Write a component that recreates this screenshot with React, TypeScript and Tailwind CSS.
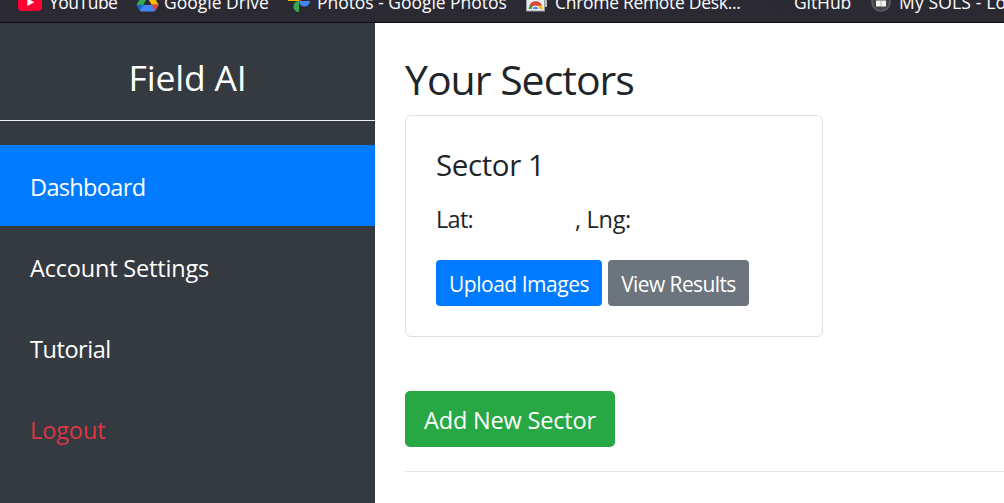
import React from "react";

function YouTubeIcon() {
  return (
    <svg width="24" height="22" viewBox="0 0 24 22" className="block">
      <rect x="0" y="4" width="24" height="17" rx="4" fill="#ff0033" />
      <path d="M9.3 8.4v7.6l7-3.8z" fill="#fff" />
    </svg>
  );
}

function DriveIcon() {
  return (
    <svg width="23" height="22" viewBox="0 0 23 22" className="block">
      <path d="M8 2h7l-3.5 5.6L4.2 20.500 0.500 14.600z" fill="#34a853" />
      <path d="M8 2h7l7.700 12.800h-7.200z" fill="#fbbc04" />
      <path d="M7.600 14.800h15.100l-3.500 5.900c-.3.500-.8.800-1.400.8H5.200c-.6 0-1.200-.3-1.400-.8z" fill="#4285f4" />
      <path d="M15.500 14.800h7.200l-3.700 6z" fill="#ea4335" />
      <path d="M0.500 14.800h7.100l-3.700 6z" fill="#1967d2" />
      <path d="M11.500 8.400l4 6.400H7.600z" fill="#2b2a33" />
    </svg>
  );
}

function PhotosIcon() {
  return (
    <svg width="22" height="24" viewBox="0 0 22 24" className="block">
      <path d="M11 1a5.500 5.500 0 0 1 0 11z" fill="#ea4335" />
      <path d="M0 12a5.500 5.500 0 0 1 11 0z" fill="#fbbc04" />
      <path d="M11 12h11a5.500 5.500 0 0 1-11 0z" fill="#4285f4" />
      <path d="M11 12v11a5.500 5.500 0 0 1 0-11z" fill="#34a853" />
    </svg>
  );
}

function RemoteDesktopIcon() {
  return (
    <svg width="22" height="24" viewBox="0 0 22 24" className="block">
      <rect x="5" y="1" width="16" height="17" fill="#b9bcbd" />
      <rect x="0.500" y="5" width="18" height="17" fill="#eceeee" stroke="#9c9f9f" />
      <path d="M2.500 20a7 7 0 0 1 14 0z" fill="#34a853" />
      <path d="M3.500 16a7 7 0 0 1 12.500 0l-3 1.500H6z" fill="#db4437" />
      <path d="M12 16.500h4a7 7 0 0 1 .5 3.500H12z" fill="#fbbc04" />
      <path d="M6 20a3.500 3.500 0 0 1 7 0z" fill="#fff" />
      <path d="M7 20a2.500 2.500 0 0 1 5 0z" fill="#4285f4" />
    </svg>
  );
}

function GitHubIcon() {
  return (
    <svg width="22" height="22" viewBox="0 0 22 22" className="block">
      <circle cx="11" cy="11" r="10" fill="#292a30" />
    </svg>
  );
}

function SolsIcon() {
  return (
    <svg width="20" height="22" viewBox="0 0 20 22" className="block">
      <circle cx="10" cy="12" r="9" fill="#444447" stroke="#5f5f62" strokeWidth="1.500" />
      <path d="M5 10.500h10v6H5z" fill="#f4f4f4" />
      <path d="M10 10.500v6" stroke="#a5a5a7" strokeWidth="0.800" />
    </svg>
  );
}

function BookmarksBar() {
  const text = "shrink-0 whitespace-nowrap pt-px text-[17.5px] leading-6";
  return (
    <header className="h-[23px] overflow-hidden border-b border-[#0c0c10] bg-[#2b2a33] text-[#fbfbfe]">
      <div className="-mt-[11px] flex h-6 items-center pl-[18px]">
        <div className="flex w-[118px] shrink-0 items-center gap-[7px]">
          <YouTubeIcon />
          <span className={`${text} tracking-[-0.5px]`}>YouTube</span>
        </div>
        <div className="flex w-[152px] shrink-0 items-center gap-[5px]">
          <DriveIcon />
          <span className={text}>Google Drive</span>
        </div>
        <div className="flex w-[238px] shrink-0 items-center gap-[7px]">
          <PhotosIcon />
          <span className={`${text} tracking-[-0.04px]`}>Photos - Google Photos</span>
        </div>
        <div className="flex w-[240px] shrink-0 items-center gap-[7px]">
          <RemoteDesktopIcon />
          <span className={`${text} tracking-[-0.3px]`}>Chrome Remote Desk...</span>
        </div>
        <div className="flex w-[105px] shrink-0 items-center gap-[6px]">
          <GitHubIcon />
          <span className={`${text} tracking-[-0.1px]`}>GitHub</span>
        </div>
        <div className="flex shrink-0 items-center gap-[8px]">
          <SolsIcon />
          <span className={`${text} tracking-[0.15px]`}>My SOLS - Lo</span>
        </div>
      </div>
    </header>
  );
}

function Sidebar() {
  const item = "flex h-[81px] items-center pl-[30px] pt-1 text-[23.5px] whitespace-nowrap";
  return (
    <aside className="w-[375px] shrink-0 bg-[#343a40] text-white">
      <div className="flex h-[98px] items-center justify-center border-b border-[#f0f1f2] pt-[10px] text-[35.5px] leading-10 tracking-[-0.2px]">
        Field AI
      </div>
      <nav className="mt-6">
        <a className={`${item} bg-[#007bff] tracking-[-0.65px]`}>Dashboard</a>
        <a className={`${item} tracking-[-0.18px]`}>Account Settings</a>
        <a className={`${item} tracking-[-0.45px]`}>Tutorial</a>
        <a className={`${item} tracking-[-0.1px] text-[#dc3545]`}>Logout</a>
      </nav>
    </aside>
  );
}

function SectorCard() {
  return (
    <section className="mt-[2px] h-[222px] w-[418px] rounded-[6px] border border-[#dfdfdf] px-[30px] pt-[29px]">
      <h2 className="text-[29.5px] leading-10 tracking-[-0.4px]">Sector 1</h2>
      <p className="mt-4 flex text-[23.5px] leading-9">
        <span className="w-[139px] tracking-[-0.7px]">Lat:</span>
        <span className="tracking-[-0.3px]">, Lng:</span>
      </p>
      <div className="mt-[23px] flex gap-[6px] text-[21px] text-white">
        <button className="flex h-[46px] w-[166px] items-center justify-center rounded-[4px] bg-[#007bff] pt-1 tracking-[-0.48px] whitespace-nowrap">
          Upload Images
        </button>
        <button className="flex h-[46px] w-[141px] items-center justify-center rounded-[4px] bg-[#6c757d] pt-1 tracking-[-0.6px] whitespace-nowrap">
          View Results
        </button>
      </div>
    </section>
  );
}

export default function App() {
  return (
    <div className="flex h-[503px] flex-col overflow-hidden bg-white font-['Open_Sans','Noto_Sans',sans-serif] text-[#212529]">
      <BookmarksBar />
      <div className="flex min-h-0 flex-1">
        <Sidebar />
        <main className="min-w-0 flex-1 pl-[30px] pt-7">
          <h1 className="h-[62px] text-[41px] leading-[56px] tracking-[-1px]">Your Sectors</h1>
          <SectorCard />
          <button className="mt-[54px] flex h-14 w-[210px] items-center justify-center rounded-[5px] bg-[#28a745] pt-1 text-[23.5px] tracking-[-0.18px] whitespace-nowrap text-white">
            Add New Sector
          </button>
          <hr className="mt-6 border-[#e5e5e5]" />
        </main>
      </div>
    </div>
  );
}
